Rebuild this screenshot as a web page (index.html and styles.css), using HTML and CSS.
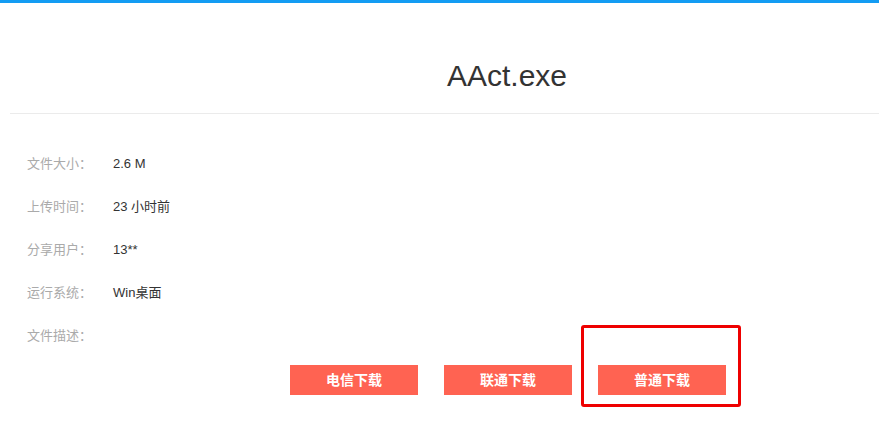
FILE: index.html
```html
<!DOCTYPE html>
<html lang="zh-CN">
<head>
<meta charset="utf-8">
<title>AAct.exe</title>
<link rel="stylesheet" href="styles.css">
</head>
<body>
<div class="topbar"></div>
<div class="page">
  <header class="head">
    <h1 class="title">AAct.exe</h1>
  </header>
  <dl class="info">
    <div class="row"><dt>文件大小：</dt><dd>2.6 M</dd></div>
    <div class="row"><dt>上传时间：</dt><dd>23 小时前</dd></div>
    <div class="row"><dt>分享用户：</dt><dd>13**</dd></div>
    <div class="row"><dt>运行系统：</dt><dd>Win桌面</dd></div>
    <div class="row"><dt>文件描述：</dt><dd></dd></div>
  </dl>
  <div class="actions">
    <a class="btn">电信下载</a>
    <a class="btn">联通下载</a>
    <a class="btn">普通下载</a>
  </div>
</div>
<div class="highlight"></div>
</body>
</html>
```

FILE: styles.css
```css
html, body {
  margin: 0;
  padding: 0;
  background: #fff;
  font-family: "Liberation Sans", Arial, "Noto Sans CJK SC", sans-serif;
  color: #333;
}
.topbar {
  height: 3px;
  background: #139cf3;
}
.page {
  position: relative;
}
.head {
  margin-left: 10px;
  padding: 53px 0 17px 125px;
  border-bottom: 1px solid #ebebeb;
  text-align: center;
}
.title {
  margin: 0;
  font-size: 30px;
  line-height: 40px;
  font-weight: normal;
  color: #333;
}
.info {
  margin: 0;
  padding: 28px 0 0 27px;
}
.row {
  display: flex;
  height: 43px;
  line-height: 43px;
  font-size: 13px;
}
.row dt {
  width: 86px;
  color: #aaa;
}
.row dd {
  margin: 0;
  color: #333;
}
.actions {
  display: flex;
  gap: 26px;
  padding: 8px 0 0 290px;
}
.btn {
  display: block;
  width: 128px;
  height: 30px;
  line-height: 30px;
  text-align: center;
  background: #ff6352;
  color: #fff;
  font-size: 14px;
  font-weight: bold;
  box-shadow: 0 1px 0 #ffd6d0;
}
.highlight {
  position: absolute;
  left: 581px;
  top: 325px;
  width: 154px;
  height: 76px;
  border: 3px solid #ee0000;
  border-radius: 3px;
}
```
